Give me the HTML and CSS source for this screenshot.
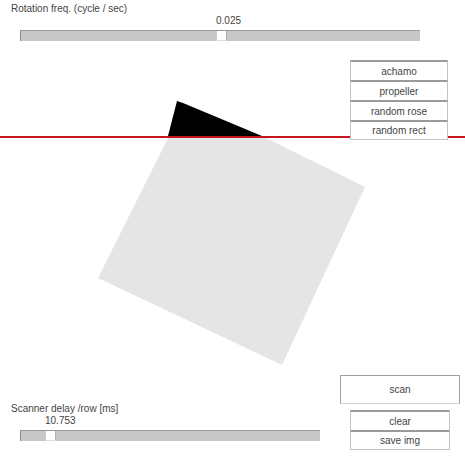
FILE: index.html
```html
<!DOCTYPE html>
<html lang="en">
<head>
  <meta charset="UTF-8" />
  <meta name="viewport" content="width=device-width, initial-scale=1.0" />
  <title>Rolling shutter</title>
  <link rel="stylesheet" href="styles.css">
</head>
<body>
  <div class="page">
    <section class="ctl ctl-freq" style="--pos: 196px">
      <div class="label">Rotation freq. (cycle / sec)</div>
      <div class="value">0.025</div>
      <div class="slider"><span class="handle"></span></div>
    </section>

    <section class="stage">
      <svg class="canvas" width="465" height="329" viewBox="0 41 465 329">
        <polygon points="168,138 266,138 365,187 282,365 98,278" fill="#e5e5e5" />
        <polygon points="177,101 183,103 262,136 168,136" fill="#000" />
        <rect x="0" y="136" width="465" height="2" fill="#c8141c" />
      </svg>

      <div class="menu">
        <button class="btn">achamo</button>
        <button class="btn">propeller</button>
        <button class="btn">random rose</button>
        <button class="btn">random rect</button>
      </div>
    </section>

    <section class="bottom">
      <div class="ctl ctl-delay" style="--pos: 25px">
        <div class="label">Scanner delay /row [ms]</div>
        <div class="value">10.753</div>
        <div class="slider"><span class="handle"></span></div>
      </div>

      <div class="actions">
        <button class="btn btn-scan">scan</button>
        <div class="group">
          <button class="btn">clear</button>
          <button class="btn">save img</button>
        </div>
      </div>
    </section>
  </div>
</body>
</html>
```

FILE: styles.css
```css
body {
  margin: 0;
  background: #fff;
  color: #444;
  font-family: 'Liberation Sans', Arial, sans-serif;
  font-size: 10px;
}

.page {
  width: 465px;
  height: 465px;
  display: flex;
  flex-direction: column;
  overflow: hidden;
}

/* slider controls */
.ctl {
  display: flex;
  flex-direction: column;
}

.ctl-freq {
  padding-top: 3px;
}

.label {
  padding-left: 11px;
  line-height: 12px;
}

.value {
  padding-left: calc(20px + var(--pos));
  line-height: 12px;
  margin-bottom: 3px;
}

.slider {
  position: relative;
  margin-left: 20px;
  height: 10px;
  background: #c8c8c8;
  border-top: 1px solid #9a9a9a;
  border-left: 1px solid #8a8a8a;
  box-sizing: content-box;
}

.ctl-freq .slider {
  width: 399px;
}

.ctl-delay .slider {
  width: 299px;
}

.handle {
  position: absolute;
  top: 0;
  left: var(--pos);
  width: 9px;
  height: 9px;
  background: #fff;
  border-right: 1px solid #b0b0b0;
  border-bottom: 1px solid #e0e0e0;
}

/* drawing area */
.stage {
  position: relative;
  height: 329px;
}

.canvas {
  display: block;
}

.menu {
  position: absolute;
  top: 19px;
  left: 350px;
  width: 98px;
  display: flex;
  flex-direction: column;
}

.btn {
  display: block;
  margin: 0;
  padding: 0;
  height: 20px;
  background: #fff;
  color: #444;
  font-family: inherit;
  font-size: 10px;
  text-align: center;
  border: 1px solid #c4c4c4;
  border-top: 2px solid #9a9a9a;
  border-bottom: none;
  box-sizing: border-box;
}

.menu .btn:last-child,
.group .btn:last-child {
  border-bottom: 1px solid #c4c4c4;
}

/* bottom bar */
.bottom {
  display: flex;
  justify-content: space-between;
}

.ctl-delay {
  margin-top: 33px;
  width: 330px;
}

.actions {
  width: 125px;
  padding-top: 5px;
  display: flex;
  flex-direction: column;
}

.btn-scan {
  width: 120px;
  height: 29px;
  border: 1px solid #a0a0a0;
  border-bottom-color: #d0d0d0;
}

.group {
  margin-top: 6px;
  margin-left: 10px;
  width: 100px;
  display: flex;
  flex-direction: column;
}
```
